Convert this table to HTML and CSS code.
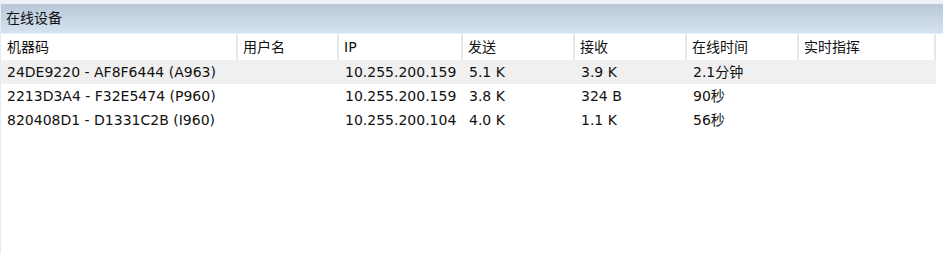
FILE: index.html
```html
<!DOCTYPE html>
<html>
<head>
<meta charset="utf-8">
<link rel="stylesheet" href="styles.css">
</head>
<body>
<div class="panel">
  <div class="title">在线设备</div>
  <div class="list">
    <div class="row head">
      <div class="c">机器码</div>
      <div class="c">用户名</div>
      <div class="c">IP</div>
      <div class="c">发送</div>
      <div class="c">接收</div>
      <div class="c">在线时间</div>
      <div class="c">实时指挥</div>
    </div>
    <div class="row sel">
      <div class="c">24DE9220 - AF8F6444 (A963)</div>
      <div class="c"></div>
      <div class="c">10.255.200.159</div>
      <div class="c">5.1 K</div>
      <div class="c">3.9 K</div>
      <div class="c">2.1分钟</div>
      <div class="c"></div>
    </div>
    <div class="row">
      <div class="c">2213D3A4 - F32E5474 (P960)</div>
      <div class="c"></div>
      <div class="c">10.255.200.159</div>
      <div class="c">3.8 K</div>
      <div class="c">324 B</div>
      <div class="c">90秒</div>
      <div class="c"></div>
    </div>
    <div class="row">
      <div class="c">820408D1 - D1331C2B (I960)</div>
      <div class="c"></div>
      <div class="c">10.255.200.104</div>
      <div class="c">4.0 K</div>
      <div class="c">1.1 K</div>
      <div class="c">56秒</div>
      <div class="c"></div>
    </div>
  </div>
</div>
</body>
</html>
```
FILE: styles.css
```css
html, body {
  margin: 0;
  padding: 0;
  background: #ffffff;
}
body {
  font-family: "DejaVu Sans", "Noto Sans CJK SC", sans-serif;
  font-size: 14px;
  color: #111;
}
.panel {
  width: 943px;
  height: 253px;
  box-sizing: border-box;
  border-left: 1px solid #eaeaf6;
  border-top: 4px solid #f0f0fa;
  display: flex;
  flex-direction: column;
}
.title {
  height: 30px;
  line-height: 28px;
  padding-left: 5px;
  background: linear-gradient(#b9c8d7, #d6e3f1);
  box-sizing: border-box;
  border-bottom: 1px solid #e8eef6;
}
.list {
  display: flex;
  flex-direction: column;
}
.row {
  display: grid;
  grid-template-columns: 237px 101px 124px 112px 112px 112px 137px;
  width: 935px;
  height: 24px;
  line-height: 24px;
}
.row.head {
  height: 26px;
  line-height: 26px;
}
.row.head .c {
  border-right: 2px solid #e6e6e6;
  padding-left: 5px;
}
.row.head .c:first-child {
  padding-left: 6px;
}
.c {
  padding-left: 6px;
  white-space: nowrap;
  overflow: hidden;
  box-sizing: border-box;
}
.row .c:first-child {
  padding-left: 6px;
}
.row.sel {
  background: #f0f0f0;
}
```
